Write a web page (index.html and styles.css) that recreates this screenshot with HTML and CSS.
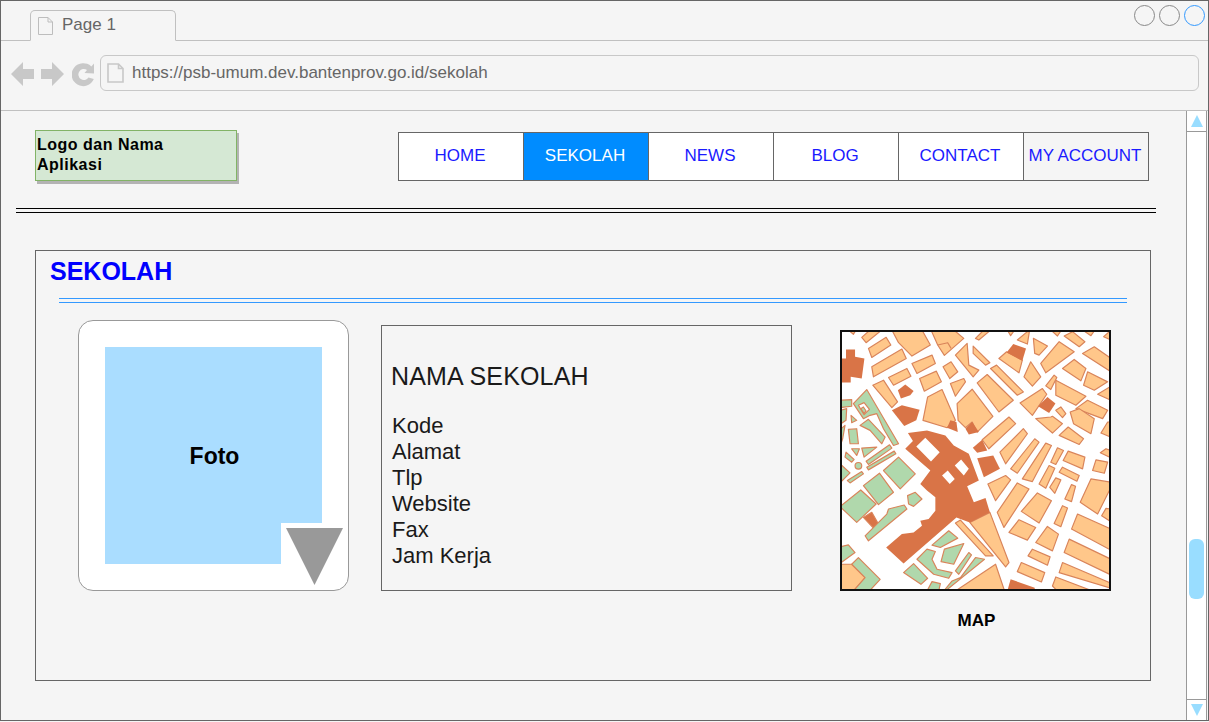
FILE: index.html
```html
<!DOCTYPE html>
<html lang="en">
<head>
    <meta charset="UTF-8">
    <meta name="viewport" content="width=device-width, initial-scale=1.0">
    <title>Sekolah</title>
    <link rel="stylesheet" href="styles.css">
</head>
<body>
    <div class="browser">
        <div class="tabbar">
            <div class="tab">
                <svg class="page-icon" width="17" height="20" viewBox="0 0 17 20"><path d="M1.500 1.500H11L15.500 6V18.500H1.500Z M11 1.500V6H15.500" fill="none" stroke="#bdbdbd"/></svg>
                <span>Page 1</span>
            </div>
            <div class="dots">
                <span class="dot"></span>
                <span class="dot"></span>
                <span class="dot dot-blue"></span>
            </div>
        </div>

        <div class="toolbar">
            <svg class="arrow" width="24" height="26" viewBox="0 0 24 26"><path d="M0 13L12 1V8H23V18H12V25Z" fill="#c8c8c8"/></svg>
            <svg class="arrow" width="24" height="26" viewBox="0 0 24 26"><path d="M23 13L11 1V8H0V18H11V25Z" fill="#c8c8c8"/></svg>
            <svg class="reload" width="23" height="26" viewBox="0 0 23 26"><path d="M16.500 16.500A5.500 5.500 0 1 1 15 9L12.500 12L22 12.500V2.500L19.300 5.500A11.500 11.500 0 1 0 21.800 18Z" fill="#c8c8c8"/></svg>
            <div class="urlbar">
                <svg width="17" height="20" viewBox="0 0 17 20"><path d="M1 1H11.500L16 5.500V19H1Z M11.500 1V5.500H16" fill="none" stroke="#c8c8c8" stroke-width="1.600"/></svg>
                <span>https://psb-umum.dev.bantenprov.go.id/sekolah</span>
            </div>
        </div>

        <div class="page">
            <div class="content">
                <div class="topbar">
                    <div class="logo">Logo dan Nama<br>Aplikasi</div>
                    <ul class="menu">
                        <li><a href="#">HOME</a></li>
                        <li class="active"><a href="#">SEKOLAH</a></li>
                        <li><a href="#">NEWS</a></li>
                        <li><a href="#">BLOG</a></li>
                        <li><a href="#">CONTACT</a></li>
                        <li class="account"><a href="#">MY ACCOUNT</a></li>
                    </ul>
                </div>
                <div class="rule"></div>

                <div class="panel">
                    <h2 class="panel-title">SEKOLAH</h2>
                    <div class="panel-rule"></div>
                    <div class="columns">
                        <div class="photo">
                            <div class="photo-fill">Foto</div>
                            <div class="photo-notch"></div>
                            <svg class="photo-arrow" width="57" height="57" viewBox="0 0 57 57"><path d="M0 0H57L28.500 57Z" fill="#999"/></svg>
                        </div>

                        <div class="info">
                            <h3>NAMA SEKOLAH</h3>
                            <p>Kode</p>
                            <p>Alamat</p>
                            <p>Tlp</p>
                            <p>Website</p>
                            <p>Fax</p>
                            <p>Jam Kerja</p>
                        </div>

                        <div class="map-col">
                            <svg class="map" viewBox="36 36 798 768" preserveAspectRatio="none">
                                <rect x="30" y="30" width="810" height="780" fill="#fff"/>
                                <g fill="#ffc78a" stroke="#d9845a" stroke-width="3.500" stroke-linejoin="round">
                                    <path d="M55 30L78 30L70 43Z"/>
                                    <path d="M95 52L120 30L155 30L108 68Z"/>
                                    <path d="M115 85L168 52L182 75L125 112Z"/>
                                    <path d="M125 140L215 87L228 115L130 170Z"/>
                                    <path d="M185 30L275 30L300 75L245 108L205 68Z"/>
                                    <path d="M302 30L370 30L400 55L342 106L322 75Z"/>
                                    <path d="M322 75L352 68L362 85" fill="none"/>
                                    <path d="M435 55L460 30L475 35L445 60Z"/>
                                    <path d="M530 30L552 30L540 47Z"/>
                                    <path d="M560 60L590 35L596 35L590 72Z"/>
                                    <path d="M608 55L650 78L625 105L612 100Z"/>
                                    <path d="M660 30L692 30L680 48Z"/>
                                    <path d="M700 48L725 35L762 65L745 80Z"/>
                                    <path d="M755 30L792 30L780 47Z"/>
                                    <path d="M818 50L835 35L840 35L840 60Z"/>
                                    <path d="M630 130L685 65L730 95L645 158Z"/>
                                    <path d="M755 100L790 80L840 115L840 155Z"/>
                                    <path d="M695 145L730 118L765 145L750 182Z"/>
                                    <path d="M770 155L830 185L790 210L758 195Z"/>
                                    <path d="M675 180L765 228L735 255L675 225Z"/>
                                    <path d="M800 222L840 198L840 240Z"/>
                                    <path d="M735 265L770 240L830 270L815 295Z"/>
                                    <path d="M830 305L840 305L840 350L810 338Z"/>
                                    <path d="M580 170L600 125L630 170L605 198Z"/>
                                    <path d="M645 197L670 165L678 172L660 208Z"/>
                                    <path d="M505 115L528 95L575 120L565 158Z"/>
                                    <path d="M480 145L498 135L578 215L560 225Z"/>
                                    <path d="M440 188L470 163L548 240L505 275Z"/>
                                    <path d="M380 250L425 207L487 288L440 335L425 305L405 322L383 300Z"/>
                                    <path d="M360 190L400 175L405 185L375 228Z"/>
                                    <path d="M338 140L362 125L382 155L358 175Z"/>
                                    <path d="M428 78L478 128L465 135L428 100Z"/>
                                    <path d="M375 105L410 70L415 135L445 150L428 170Z"/>
                                    <path d="M245 130L305 105L315 130L260 160Z"/>
                                    <path d="M175 172L230 145L242 168L190 195Z"/>
                                    <path d="M268 175L318 153L333 185L282 213Z"/>
                                    <path d="M128 195L160 180L202 245L185 262Z"/>
                                    <path d="M292 230L335 208L375 300L350 322L278 300Z"/>
                                    <path d="M568 248L635 205L648 222L605 285Z"/>
                                    <path d="M675 270L690 260L705 280L695 292Z"/>
                                    <path d="M718 275L745 265L790 295L780 340L728 310Z"/>
                                    <path d="M615 295L660 290L665 288L695 310L665 338Z"/>
                                    <path d="M685 345L712 320L758 355L745 372Z"/>
                                    <path d="M455 358L535 290L555 310L475 385Z"/>
                                    <path d="M508 395L578 325L590 340L525 430Z"/>
                                    <path d="M540 445L612 355L625 365L560 458Z"/>
                                    <path d="M575 475L645 368L662 375L605 483Z"/>
                                    <path d="M625 490L655 435L672 443L645 503Z"/>
                                    <path d="M660 425L680 382L698 390L675 432Z"/>
                                    <path d="M657 500L675 472L690 478L672 518Z"/>
                                    <path d="M697 420L712 392L762 410L755 445Z"/>
                                    <path d="M685 455L695 440L745 465L738 482Z"/>
                                    <path d="M702 535L722 492L734 497L722 543Z"/>
                                    <path d="M785 450L795 418L830 425L820 458Z"/>
                                    <path d="M808 397L825 385L840 390L840 412Z"/>
                                    <path d="M748 545L780 475L840 485L840 500L800 580Z"/>
                                    <path d="M472 490L525 465L540 478L495 540Z"/>
                                    <path d="M500 575L560 487L595 505L520 620Z"/>
                                    <path d="M572 572L620 517L662 540L625 607Z"/>
                                    <path d="M670 608L695 555L710 562L690 618Z"/>
                                    <path d="M535 635L565 597L615 620L590 658Z"/>
                                    <path d="M615 665L650 617L683 640L665 690Z"/>
                                    <path d="M722 625L740 580L840 625L840 688Z"/>
                                    <path d="M700 695L715 655L840 715L840 762Z"/>
                                    <path d="M812 585L825 563L840 565L840 603Z"/>
                                    <path d="M592 705L605 685L658 708L650 733Z"/>
                                    <path d="M560 752L572 725L642 755L632 783Z"/>
                                    <path d="M685 755L695 725L840 787L840 802Z"/>
                                    <path d="M665 795L675 768L785 810L680 810Z"/>
                                    <path d="M375 810L495 730L522 810Z"/>
                                    <path d="M418 605L478 575L535 725L525 738Z"/>
                                    <path d="M375 607L390 598L488 705L465 705Z"/>
                                    <path d="M30 730L65 730L105 770L70 810L30 810Z"/>
                                    <path d="M100 590L125 575L148 615L130 622Z" fill="#d97447"/>
                                </g>
                                <g fill="#b0d8ac" stroke="#d9845a" stroke-width="3.500" stroke-linejoin="round">
                                    <path d="M30 240L65 238L65 258L30 262Z"/>
                                    <path d="M30 270L50 265L48 300L30 312Z"/>
                                    <path d="M30 328L45 315L38 355L30 378Z"/>
                                    <path fill-rule="evenodd" d="M70 250L110 208L205 370L190 375L160 325L140 280L120 285L100 295Z M85 255L102 247L118 267L102 283Z"/>
                                    <path d="M92 265L100 260L108 272L102 280Z"/>
                                    <path d="M90 315L115 297L165 350L155 370L120 330Z"/>
                                    <path d="M63 285L80 300L65 307Z"/>
                                    <path d="M55 327L80 325L85 370L60 370Z"/>
                                    <path d="M48 395L72 417L65 425L45 410Z"/>
                                    <path d="M65 385L88 385L80 405Z"/>
                                    <path d="M95 383L140 380L102 410Z"/>
                                    <path d="M108 422L178 373L185 383L115 432Z"/>
                                    <path d="M110 440L192 392L197 400L115 448Z"/>
                                    <path d="M52 480L95 453L100 460L60 487Z"/>
                                    <path d="M30 430L60 457L30 487Z"/>
                                    <circle cx="85" cy="436" r="10"/>
                                    <path d="M160 450L205 410L255 460L210 505Z"/>
                                    <path d="M100 495L148 458L190 515L145 552Z"/>
                                    <path d="M30 558L92 508L138 550L80 605Z"/>
                                    <path d="M105 645L170 580L175 565L222 553L230 565L115 660Z"/>
                                    <path d="M232 525L255 515L275 535L250 557L235 550Z"/>
                                    <path d="M305 673L355 630L382 652L330 680Z"/>
                                    <path d="M332 722L342 685L400 668L370 730Z"/>
                                    <path d="M220 755L250 728L292 772L272 790Z"/>
                                    <path d="M260 715L290 685L315 692L305 715L320 745L365 755L355 772L310 760Z"/>
                                    <path d="M375 750L415 695L423 702L385 760Z"/>
                                    <path d="M290 810L305 782L330 788L325 810Z"/>
                                    <path d="M340 810L365 780L390 770L435 710L462 715L345 810Z"/>
                                    <path d="M30 678L55 672L75 695L30 728Z"/>
                                    <path d="M85 710L150 775L118 810L70 810L105 770L65 730Z"/>
                                </g>
                                <g fill="#d97447">
                                    <path d="M528 97L548 72L586 85L575 122Z"/>
                                    <path d="M405 325L425 305L445 335L415 342Z"/>
                                    <path d="M350 322L360 300L378 305L382 335Z"/>
                                    <path d="M622 258L650 230L674 250L655 278Z"/>
                                    <path d="M427 382L455 358L470 390L440 397Z"/>
                                    <path d="M530 810L540 775L612 800L612 810Z"/>
                                    <path d="M440 413L488 405L508 445L460 470Z"/>
                                    <path d="M203 210L225 193L250 212L240 225L212 235Z"/>
                                    <path d="M185 270L215 255L268 268L258 300L222 317Z"/>
                                    <path d="M48 88L75 88L75 110L103 115L95 175L62 170L62 187L30 187L30 115L48 115Z"/>
                                    <path fill-rule="evenodd" d="M233 338L290 330L345 345L370 375L415 400L445 480L410 497L430 545L465 532L478 575L418 605L378 590L220 728L168 680L215 640L250 635L275 615L270 600L295 595L315 570L315 530L290 510L270 490L300 450L225 385L248 362Z M258 378L285 352L328 395L302 423Z M373 435L392 417L415 445L400 465Z M335 465L352 450L373 475L358 490Z"/>
                                </g>
                            </svg>
                            <div class="map-label">MAP</div>
                        </div>
                    </div>
                </div>
            </div>

            <div class="scrollbar">
                <div class="scroll-btn"><span class="tri-up"></span></div>
                <div class="scroll-track"><div class="scroll-thumb"></div></div>
                <div class="scroll-btn scroll-btn-down"><span class="tri-down"></span></div>
            </div>
        </div>
    </div>
</body>
</html>
```

FILE: styles.css
```css
* {
    box-sizing: border-box;
}

body {
    margin: 0;
    font-family: "Liberation Sans", Arial, sans-serif;
    background: #f5f5f5;
}

.browser {
    width: 1209px;
    height: 721px;
    border: 1px solid #666;
    display: flex;
    flex-direction: column;
    overflow: hidden;
}

/* browser chrome */
.tabbar {
    height: 40px;
    flex: none;
    display: flex;
    justify-content: space-between;
    padding-left: 29px;
    padding-top: 9px;
    border-bottom: 1px solid #c0c0c0;
}

.tab {
    width: 146px;
    height: 31px;
    margin-bottom: -1px;
    border: 1px solid #c0c0c0;
    border-bottom: 1px solid #f5f5f5;
    border-radius: 5px 5px 0 0;
    display: flex;
    align-items: flex-start;
    padding: 5px 0 0 6px;
    color: #666;
    font-size: 17px;
}

.tab span {
    margin-left: 8px;
    line-height: 18px;
}

.page-icon {
    margin-top: 0;
}

.dots {
    display: flex;
    gap: 4px;
    padding-right: 3px;
    margin-top: -5px;
}

.dot {
    width: 21px;
    height: 21px;
    border: 1.5px solid #888;
    border-radius: 50%;
}

.dot-blue {
    border-color: #3399ff;
}

.toolbar {
    height: 70px;
    flex: none;
    display: flex;
    align-items: center;
    padding: 0 9px 5px 10px;
    border-bottom: 1px solid #c0c0c0;
}

.arrow {
    margin-right: 6px;
    margin-top: 2px;
}

.reload {
    margin-left: 1px;
    margin-top: 2px;
}

.urlbar {
    flex: 1;
    height: 36px;
    margin-left: 5px;
    border: 1px solid #c8c8c8;
    border-radius: 6px;
    display: flex;
    align-items: center;
    padding-left: 6px;
    color: #666;
    font-size: 17px;
}

.urlbar span {
    margin-left: 8px;
}

/* page area */
.page {
    flex: 1;
    display: flex;
    min-height: 0;
}

.content {
    flex: 1;
}

.topbar {
    display: flex;
    justify-content: space-between;
    align-items: flex-start;
    padding: 19px 37px 0 34px;
}

.logo {
    width: 202px;
    height: 51px;
    padding: 4px 1px 0;
    background: #d5e8d4;
    border: 1px solid #82b366;
    box-shadow: 2px 3px 0 #b3b3b3;
    font-size: 16px;
    font-weight: bold;
    line-height: 20px;
    letter-spacing: 0.5px;
    color: #000;
}

.menu {
    list-style: none;
    margin: 2px 0 0;
    padding: 0;
    display: flex;
    width: 751px;
    height: 49px;
    border: 1px solid #666;
    font-size: 17px;
}

.menu li {
    flex: 1;
    display: flex;
    align-items: center;
    justify-content: center;
    padding: 0 2px 2px 0;
    background: #fff;
    border-left: 1px solid #666;
}

.menu li:first-child {
    border-left: none;
}

.menu a {
    text-decoration: none;
    color: #1a1aff;
    white-space: nowrap;
}

.menu .active {
    background: #008cff;
}

.menu .active a {
    color: #fff;
}

.menu .account {
    background: #f5f5f5;
}

.rule {
    width: 1140px;
    height: 5px;
    margin: 27px 0 0 15px;
    border-top: 1px solid #000;
    border-bottom: 1px solid #000;
}

.panel {
    width: 1116px;
    height: 431px;
    margin: 37px 0 0 34px;
    border: 1px solid #666;
}

.panel-title {
    margin: 0;
    padding: 7px 0 0 14px;
    font-size: 25px;
    line-height: 27px;
    color: #0000ff;
}

.panel-rule {
    width: 1068px;
    height: 5px;
    margin: 13px 0 0 23px;
    border-top: 1px solid #3399ff;
    border-bottom: 1px solid #3399ff;
}

.columns {
    display: flex;
    align-items: flex-start;
    padding: 17px 0 0 42px;
}

.photo {
    position: relative;
    width: 271px;
    height: 271px;
    flex: none;
    background: #fff;
    border: 1px solid #999;
    border-radius: 15px;
    padding: 26px;
}

.photo-fill {
    width: 217px;
    height: 217px;
    padding: 2px 0 0 2px;
    background: #aaddff;
    display: flex;
    align-items: center;
    justify-content: center;
    font-size: 23px;
    font-weight: bold;
}

.photo-notch {
    position: absolute;
    left: 202px;
    top: 202px;
    width: 41px;
    height: 41px;
    background: #fff;
}

.photo-arrow {
    position: absolute;
    left: 207px;
    top: 207px;
}

.info {
    width: 411px;
    height: 266px;
    flex: none;
    margin: 5px 0 0 32px;
    padding: 36px 0 0 9px;
    border: 1px solid #666;
    color: #1a1a1a;
    font-size: 22px;
    line-height: 26px;
}

.info h3 {
    margin: 0 0 23px;
    font-size: 25px;
    font-weight: normal;
    line-height: 28px;
    letter-spacing: 0.15px;
}

.info p {
    margin: 0 0 0 1px;
}

.map-col {
    margin: 10px 0 0 48px;
    width: 271px;
    text-align: center;
}

.map {
    display: block;
    width: 271px;
    height: 261px;
    border: 2px solid #111;
}

.map-label {
    margin-top: 21px;
    padding-left: 2px;
    font-size: 17px;
    font-weight: bold;
    line-height: 18px;
}

/* scrollbar */
.scrollbar {
    width: 21px;
    flex: none;
    margin-right: 1px;
    background: #fff;
    border-left: 1px solid #999;
    border-right: 1px solid #999;
    display: flex;
    flex-direction: column;
}

.scroll-btn {
    height: 21px;
    flex: none;
    display: flex;
    align-items: center;
    justify-content: center;
    border-bottom: 1px solid #999;
}

.scroll-btn-down {
    border-bottom: none;
    border-top: 1px solid #999;
}

.tri-up {
    width: 0;
    height: 0;
    border-left: 6px solid transparent;
    border-right: 6px solid transparent;
    border-bottom: 12px solid #99ddff;
}

.tri-down {
    width: 0;
    height: 0;
    border-left: 6px solid transparent;
    border-right: 6px solid transparent;
    border-top: 12px solid #99ddff;
}

.scroll-track {
    flex: 1;
    padding: 407px 2px 0;
}

.scroll-thumb {
    height: 60px;
    background: #99ddff;
    border-radius: 6px;
}
```
